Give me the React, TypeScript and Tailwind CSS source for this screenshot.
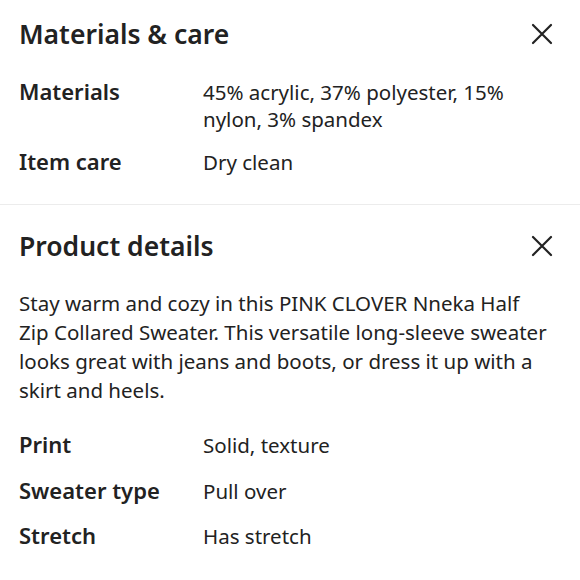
import React from "react";

const font = { fontFamily: "'Noto Sans', Lato, sans-serif" };

const CloseIcon = () => (
  <svg width="22" height="22" viewBox="0 0 22 22" fill="none">
    <path d="M2 2L20 20M20 2L2 20" stroke="#222" strokeWidth="2.2" strokeLinecap="round" />
  </svg>
);

function Row({ label, value, className = "" }: { label: string; value: string; className?: string }) {
  return (
    <div className={`flex items-baseline ${className}`}>
      <div className="w-[184px] shrink-0 text-[22px] font-semibold leading-[28px] text-[#222]">{label}</div>
      <div className="flex-1 text-[20.5px] leading-[27px] text-[#222]">{value}</div>
    </div>
  );
}

export default function App() {
  return (
    <div className="w-[580px] h-[580px] bg-white overflow-hidden" style={font}>
      <section className="px-[19px] pt-[18px] pb-[28px]">
        <div className="flex items-center justify-between">
          <h2 className="text-[26.5px] font-semibold leading-[32px] text-[#222]">Materials &amp; care</h2>
          <button className="mr-[8px]"><CloseIcon /></button>
        </div>
        <Row className="mt-[27px]" label="Materials" value="45% acrylic, 37% polyester, 15% nylon, 3% spandex" />
        <Row className="mt-[14px]" label="Item care" value="Dry clean" />
      </section>
      <div className="h-px bg-[#ececec]" />
      <section className="px-[19px] pt-[25px]">
        <div className="flex items-center justify-between">
          <h2 className="text-[26.5px] font-semibold leading-[32px] text-[#222]">Product details</h2>
          <button className="mr-[8px]"><CloseIcon /></button>
        </div>
        <p className="mt-[27px] w-[531px] text-[20.5px] leading-[29px] text-[#222]">
          Stay warm and cozy in this PINK CLOVER Nneka Half Zip Collared Sweater. This versatile long-sleeve sweater looks great with jeans and boots, or dress it up with a skirt and heels.
        </p>
        <div className="mt-[25px] flex flex-col gap-[16.5px]">
          <Row label="Print" value="Solid, texture" />
          <Row label="Sweater type" value="Pull over" />
          <Row label="Stretch" value="Has stretch" />
        </div>
      </section>
    </div>
  );
}
